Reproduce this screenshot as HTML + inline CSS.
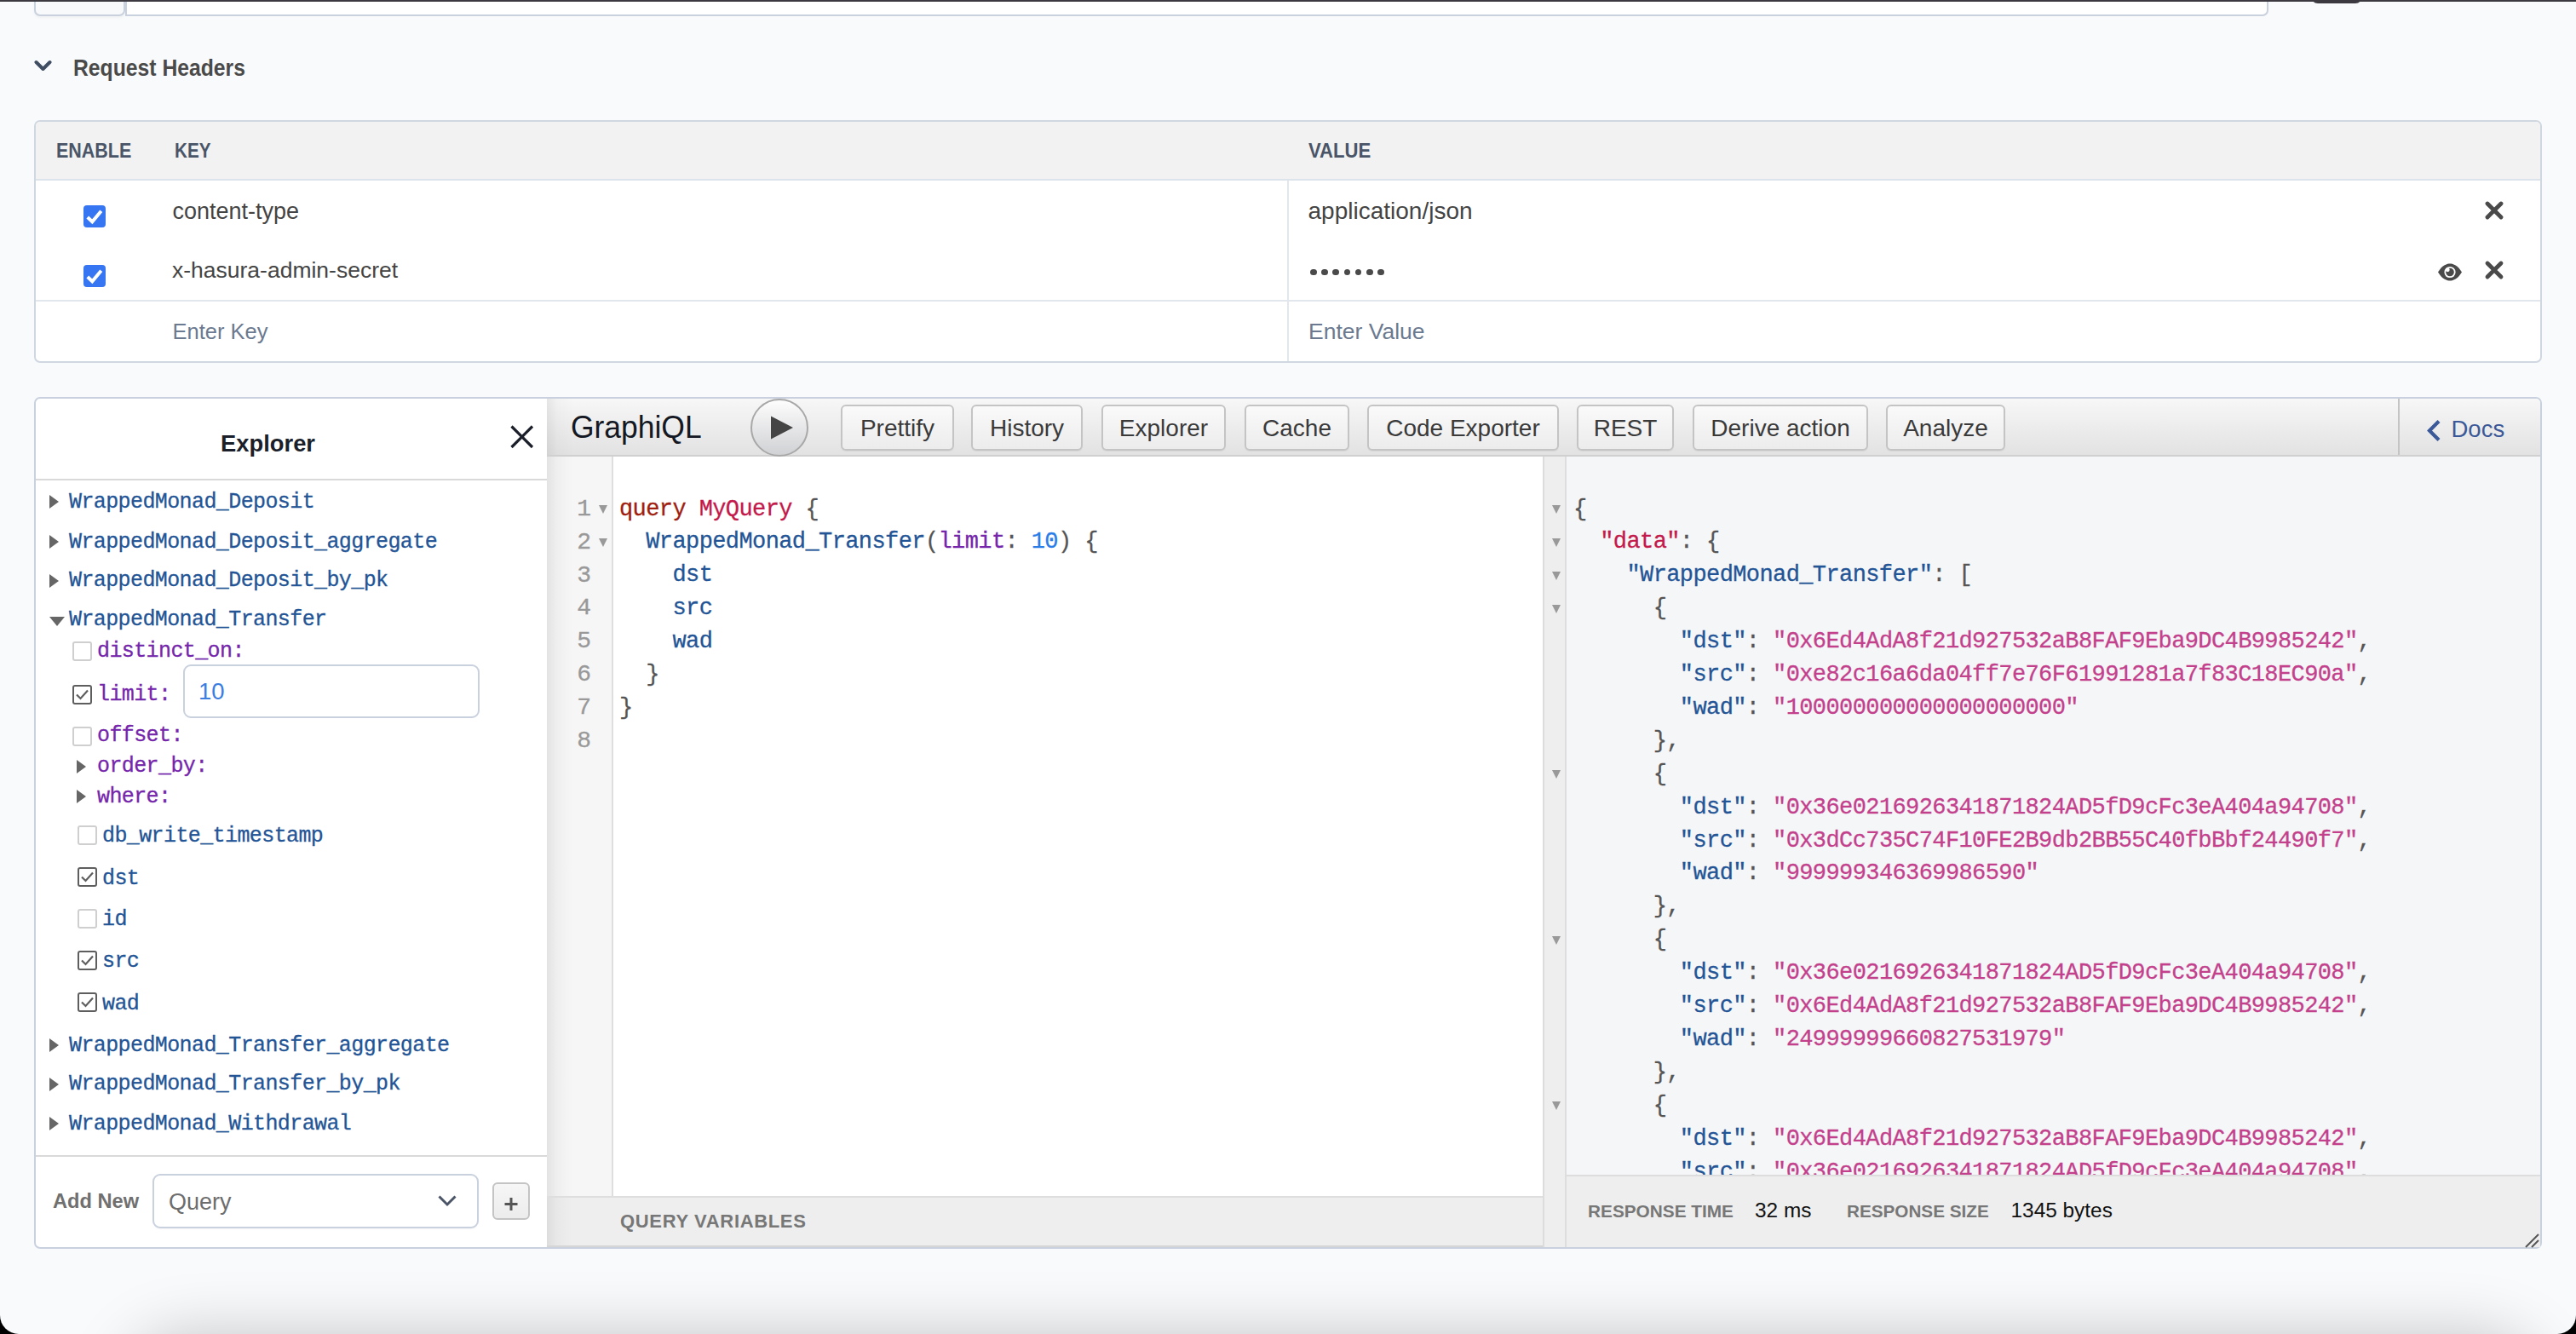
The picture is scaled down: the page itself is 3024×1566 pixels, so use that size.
<!DOCTYPE html>
<html><head><meta charset="utf-8">
<style>
*{box-sizing:border-box;margin:0;padding:0}
html,body{width:3024px;height:1566px;overflow:hidden;background:#000}
body{font-family:"Liberation Sans",sans-serif;position:relative}
.win{position:absolute;left:0;top:0;width:3024px;height:1566px;background:#f9fafc;border-radius:0 0 22px 22px;overflow:hidden}
.abs{position:absolute}
.mono{font-family:"Liberation Mono",monospace;-webkit-text-stroke-width:0.3px}
.t{position:absolute;white-space:pre;line-height:1}
.btn{position:absolute;top:475px;height:54px;border:2px solid #c4c4c4;border-radius:6px;background:linear-gradient(#fafafa,#ececec);box-shadow:0 1px 1px rgba(0,0,0,0.06)}
.cb{position:absolute;width:23px;height:23px;border:2.5px solid #cfcfcf;border-radius:3px;background:#fff}
.cbk{border-color:#5e5e5e}
.tri{position:absolute;width:0;height:0;border-top:8.5px solid transparent;border-bottom:8.5px solid transparent;border-left:11px solid #666}
.trid{position:absolute;width:0;height:0;border-left:9.5px solid transparent;border-right:9.5px solid transparent;border-top:11px solid #666}
.fold{position:absolute;width:0;height:0;border-left:6px solid transparent;border-right:6px solid transparent;border-top:10px solid #999}
</style></head><body>
<div class="win">
<div class="abs" style="left:40px;top:-12px;width:107px;height:31px;border:2px solid #c9d1de;border-radius:7px;background:#f8f9fb;box-shadow:0 2px 3px rgba(0,0,0,0.04)"></div>
<div class="abs" style="left:147px;top:-12px;width:2516px;height:31px;border:2px solid #c9d1de;border-radius:0 7px 7px 0;background:#fff"></div>
<div class="abs" style="left:0px;top:0px;width:3024px;height:2px;background:#3c3a40"></div>
<div class="abs" style="left:2713px;top:-12px;width:60px;height:16px;background:#3c3a40;border-radius:9px"></div>
<svg class="abs" style="left:40px;top:69px" width="22" height="18" viewBox="0 0 22 18"><path d="M2.5 4 L10.5 12 L18.5 4" fill="none" stroke="#3f4d63" stroke-width="4" stroke-linecap="round" stroke-linejoin="round"/></svg>
<div class="t" style="left:86.0px;top:66.3px;font-size:28px;color:#4a4a4a;font-weight:bold;transform:scaleX(0.883);transform-origin:0 0;">Request Headers</div>
<div class="abs" style="left:40px;top:141px;width:2944px;height:285px;border:2px solid #d0d7e1;border-radius:7px;background:#fff"></div>
<div class="abs" style="left:42px;top:143px;width:2940px;height:67px;background:#f2f2f2;border-radius:5px 5px 0 0"></div>
<div class="abs" style="left:42px;top:210px;width:2940px;height:2px;background:#dde3ea"></div>
<div class="t" style="left:66.0px;top:164.7px;font-size:24px;color:#4a5568;font-weight:bold;transform:scaleX(0.895);transform-origin:0 0;">ENABLE</div>
<div class="t" style="left:205.0px;top:164.7px;font-size:24px;color:#4a5568;font-weight:bold;transform:scaleX(0.86);transform-origin:0 0;">KEY</div>
<div class="t" style="left:1536.0px;top:164.7px;font-size:24px;color:#4a5568;font-weight:bold;transform:scaleX(0.92);transform-origin:0 0;">VALUE</div>
<div class="abs" style="left:1511px;top:212px;width:2px;height:212px;background:#e2e7ee"></div>
<div class="abs" style="left:42px;top:352px;width:2940px;height:2px;background:#e2e7ee"></div>
<div class="abs" style="left:98px;top:241px;width:26px;height:26px;background:#3676f2;border-radius:4px"></div>
<svg class="abs" style="left:98px;top:241px" width="26" height="26" viewBox="0 0 26 26"><path d="M4.8 14 L10.3 19.3 L20.8 6.8" fill="none" stroke="#fff" stroke-width="4"/></svg>
<div class="abs" style="left:98px;top:311px;width:26px;height:26px;background:#3676f2;border-radius:4px"></div>
<svg class="abs" style="left:98px;top:311px" width="26" height="26" viewBox="0 0 26 26"><path d="M4.8 14 L10.3 19.3 L20.8 6.8" fill="none" stroke="#fff" stroke-width="4"/></svg>
<div class="t" style="left:202.5px;top:234.8px;font-size:27px;color:#444;font-weight:normal;">content-type</div>
<div class="t" style="left:202.0px;top:304.4px;font-size:26.5px;color:#444;font-weight:normal;">x-hasura-admin-secret</div>
<div class="t" style="left:1535.5px;top:234.3px;font-size:28px;color:#444;font-weight:normal;">application/json</div>
<div class="abs" style="left:1538.0px;top:315.5px;width:7.5px;height:7.5px;border-radius:50%;background:#4a4a4a"></div>
<div class="abs" style="left:1551.2px;top:315.5px;width:7.5px;height:7.5px;border-radius:50%;background:#4a4a4a"></div>
<div class="abs" style="left:1564.4px;top:315.5px;width:7.5px;height:7.5px;border-radius:50%;background:#4a4a4a"></div>
<div class="abs" style="left:1577.6px;top:315.5px;width:7.5px;height:7.5px;border-radius:50%;background:#4a4a4a"></div>
<div class="abs" style="left:1590.8px;top:315.5px;width:7.5px;height:7.5px;border-radius:50%;background:#4a4a4a"></div>
<div class="abs" style="left:1604.0px;top:315.5px;width:7.5px;height:7.5px;border-radius:50%;background:#4a4a4a"></div>
<div class="abs" style="left:1617.2px;top:315.5px;width:7.5px;height:7.5px;border-radius:50%;background:#4a4a4a"></div>
<svg class="abs" style="left:2916px;top:235px" width="24" height="24" viewBox="0 0 24 24"><path d="M4 4 L20 20 M20 4 L4 20" stroke="#4a4a4a" stroke-width="4.8" stroke-linecap="round"/></svg>
<svg class="abs" style="left:2916px;top:305px" width="24" height="24" viewBox="0 0 24 24"><path d="M4 4 L20 20 M20 4 L4 20" stroke="#4a4a4a" stroke-width="4.8" stroke-linecap="round"/></svg>
<svg class="abs" style="left:2861px;top:309px" width="30" height="21" viewBox="0 0 30 21"><path d="M1 10.5 C6 2 12 0.5 15 0.5 C18 0.5 24 2 29 10.5 C24 19 18 20.5 15 20.5 C12 20.5 6 19 1 10.5 Z" fill="#4a4a4a"/><circle cx="15" cy="10.5" r="6.6" fill="#fff"/><circle cx="15" cy="10.5" r="4.8" fill="#4a4a4a"/><circle cx="12.3" cy="7.8" r="2.4" fill="#fff"/></svg>
<div class="t" style="left:202.5px;top:377.4px;font-size:25.5px;color:#6b7a90;font-weight:normal;">Enter Key</div>
<div class="t" style="left:1536.0px;top:376.1px;font-size:26.5px;color:#6b7a90;font-weight:normal;">Enter Value</div>
<div class="abs" style="left:40px;top:466px;width:2944px;height:1000px;border:2px solid #c9d1de;border-radius:7px;background:#fff"></div>
<div class="abs" style="left:42px;top:562px;width:600px;height:2px;background:#d9d9d9"></div>
<div class="t" style="left:259.0px;top:507.3px;font-size:28px;color:#1b1f2a;font-weight:bold;transform:scaleX(0.977);transform-origin:0 0;">Explorer</div>
<svg class="abs" style="left:598px;top:498px" width="30" height="30" viewBox="0 0 30 30"><path d="M2.5 2.5 L27 27 M27 2.5 L2.5 27" stroke="#1b1f2a" stroke-width="3.2"/></svg>
<div class="tri" style="left:58px;top:581.4px"></div>
<div class="t mono" style="left:81.0px;top:577.2px;font-size:25px;letter-spacing:-0.6px;color:#235596;">WrappedMonad_Deposit</div>
<div class="tri" style="left:58px;top:628.0px"></div>
<div class="t mono" style="left:81.0px;top:623.8px;font-size:25px;letter-spacing:-0.6px;color:#235596;">WrappedMonad_Deposit_aggregate</div>
<div class="tri" style="left:58px;top:673.5px"></div>
<div class="t mono" style="left:81.0px;top:669.3px;font-size:25px;letter-spacing:-0.6px;color:#235596;">WrappedMonad_Deposit_by_pk</div>
<div class="trid" style="left:57.5px;top:723.5px"></div>
<div class="t mono" style="left:81.0px;top:715.4px;font-size:25px;letter-spacing:-0.6px;color:#235596;">WrappedMonad_Transfer</div>
<div class="cb" style="left:84.5px;top:752.5px"></div>
<div class="t mono" style="left:114.0px;top:751.6px;font-size:25px;letter-spacing:-0.6px;color:#7526ab;">distinct_on:</div>
<div class="cb cbk" style="left:84.5px;top:803.5px"></div>
<svg class="abs" style="left:84.5px;top:803.5px" width="23" height="23" viewBox="0 0 23 23"><path d="M5 11.5 L9.5 16 L18 6.5" fill="none" stroke="#5e5e5e" stroke-width="2.2"/></svg>
<div class="t mono" style="left:114.0px;top:802.5px;font-size:25px;letter-spacing:-0.6px;color:#7526ab;">limit:</div>
<div class="abs" style="left:215px;top:780px;width:348px;height:63px;border:2px solid #c9d1de;border-radius:9px;background:#fff"></div>
<div class="t" style="left:233.0px;top:798.4px;font-size:27.5px;color:#3b7de0;font-weight:normal;">10</div>
<div class="cb" style="left:84.5px;top:852.5px"></div>
<div class="t mono" style="left:114.0px;top:851.0px;font-size:25px;letter-spacing:-0.6px;color:#7526ab;">offset:</div>
<div class="tri" style="left:90px;top:891.5px"></div>
<div class="t mono" style="left:114.0px;top:886.6px;font-size:25px;letter-spacing:-0.6px;color:#7526ab;">order_by:</div>
<div class="tri" style="left:90px;top:927.0px"></div>
<div class="t mono" style="left:114.0px;top:923.3px;font-size:25px;letter-spacing:-0.6px;color:#7526ab;">where:</div>
<div class="cb" style="left:90.5px;top:968.5px"></div>
<div class="t mono" style="left:120.0px;top:969.4px;font-size:25px;letter-spacing:-0.6px;color:#235596;">db_write_timestamp</div>
<div class="cb cbk" style="left:90.5px;top:1017.7px"></div>
<svg class="abs" style="left:90.5px;top:1017.7px" width="23" height="23" viewBox="0 0 23 23"><path d="M5 11.5 L9.5 16 L18 6.5" fill="none" stroke="#5e5e5e" stroke-width="2.2"/></svg>
<div class="t mono" style="left:120.0px;top:1018.8px;font-size:25px;letter-spacing:-0.6px;color:#235596;">dst</div>
<div class="cb" style="left:90.5px;top:1066.5px"></div>
<div class="t mono" style="left:120.0px;top:1067.4px;font-size:25px;letter-spacing:-0.6px;color:#235596;">id</div>
<div class="cb cbk" style="left:90.5px;top:1115.5px"></div>
<svg class="abs" style="left:90.5px;top:1115.5px" width="23" height="23" viewBox="0 0 23 23"><path d="M5 11.5 L9.5 16 L18 6.5" fill="none" stroke="#5e5e5e" stroke-width="2.2"/></svg>
<div class="t mono" style="left:120.0px;top:1116.4px;font-size:25px;letter-spacing:-0.6px;color:#235596;">src</div>
<div class="cb cbk" style="left:90.5px;top:1164.8px"></div>
<svg class="abs" style="left:90.5px;top:1164.8px" width="23" height="23" viewBox="0 0 23 23"><path d="M5 11.5 L9.5 16 L18 6.5" fill="none" stroke="#5e5e5e" stroke-width="2.2"/></svg>
<div class="t mono" style="left:120.0px;top:1166.2px;font-size:25px;letter-spacing:-0.6px;color:#235596;">wad</div>
<div class="tri" style="left:58px;top:1218.9px"></div>
<div class="t mono" style="left:81.0px;top:1214.7px;font-size:25px;letter-spacing:-0.6px;color:#235596;">WrappedMonad_Transfer_aggregate</div>
<div class="tri" style="left:58px;top:1264.6px"></div>
<div class="t mono" style="left:81.0px;top:1260.4px;font-size:25px;letter-spacing:-0.6px;color:#235596;">WrappedMonad_Transfer_by_pk</div>
<div class="tri" style="left:58px;top:1310.7px"></div>
<div class="t mono" style="left:81.0px;top:1306.5px;font-size:25px;letter-spacing:-0.6px;color:#235596;">WrappedMonad_Withdrawal</div>
<div class="abs" style="left:42px;top:1356px;width:600px;height:2px;background:#d9d9d9"></div>
<div class="t" style="left:62.0px;top:1398.3px;font-size:24px;color:#707070;font-weight:bold;transform:scaleX(0.985);transform-origin:0 0;">Add New</div>
<div class="abs" style="left:179px;top:1378px;width:383px;height:64px;border:2px solid #c9d1de;border-radius:9px;background:#fff;box-shadow:0 1px 2px rgba(0,0,0,0.04)"></div>
<div class="t" style="left:198.0px;top:1398.1px;font-size:27px;color:#6d6d6d;font-weight:normal;">Query</div>
<svg class="abs" style="left:512px;top:1400px" width="26" height="20" viewBox="0 0 26 20"><path d="M3.5 4.5 L13 14 L22.5 4.5" fill="none" stroke="#4a5568" stroke-width="3"/></svg>
<div class="abs" style="left:578px;top:1388px;width:44px;height:44px;border:2px solid #c4c4c4;border-radius:6px;background:linear-gradient(#f6f6f6,#ececec)"></div>
<svg class="abs" style="left:590px;top:1400px" width="20" height="28" viewBox="0 0 20 28"><path d="M10 6 V21 M2.5 13.5 H17.5" stroke="#555" stroke-width="3"/></svg>
<div class="abs" style="left:642px;top:468px;width:2340px;height:66px;background:linear-gradient(#f7f7f7,#e2e2e2);border-top-right-radius:5px"></div>
<div class="abs" style="left:642px;top:534px;width:2340px;height:2px;background:#d0d0d0"></div>
<div class="abs" style="left:642px;top:468px;width:33px;height:66px;background:linear-gradient(90deg,rgba(0,0,0,0.07),rgba(0,0,0,0.02) 12px,rgba(0,0,0,0) 32px)"></div>
<div class="t" style="left:670.0px;top:483.3px;font-size:37.5px;color:#141823;font-weight:normal;transform:scaleX(0.945);transform-origin:0 0;">GraphiQL</div>
<div class="abs" style="left:881px;top:467.5px;width:68px;height:68px;border-radius:50%;border:2px solid #a8a8a8;background:linear-gradient(#fdfdfd,#d0d1d4)"></div>
<svg class="abs" style="left:904px;top:487px" width="28" height="30" viewBox="0 0 28 30"><path d="M1 1.5 L27 15 L1 28.5 Z" fill="#444"/></svg>
<div class="btn" style="left:987px;width:133px"></div>
<div class="t" style="left:987px;width:133px;top:488.8px;font-size:28px;color:#3a3a3a;text-align:center">Prettify</div>
<div class="btn" style="left:1140px;width:131px"></div>
<div class="t" style="left:1140px;width:131px;top:488.8px;font-size:28px;color:#3a3a3a;text-align:center">History</div>
<div class="btn" style="left:1293px;width:146px"></div>
<div class="t" style="left:1293px;width:146px;top:488.8px;font-size:28px;color:#3a3a3a;text-align:center">Explorer</div>
<div class="btn" style="left:1461px;width:123px"></div>
<div class="t" style="left:1461px;width:123px;top:488.8px;font-size:28px;color:#3a3a3a;text-align:center">Cache</div>
<div class="btn" style="left:1605px;width:225px"></div>
<div class="t" style="left:1605px;width:225px;top:488.8px;font-size:28px;color:#3a3a3a;text-align:center">Code Exporter</div>
<div class="btn" style="left:1851px;width:114px"></div>
<div class="t" style="left:1851px;width:114px;top:488.8px;font-size:28px;color:#3a3a3a;text-align:center">REST</div>
<div class="btn" style="left:1987px;width:206px"></div>
<div class="t" style="left:1987px;width:206px;top:488.8px;font-size:28px;color:#3a3a3a;text-align:center">Derive action</div>
<div class="btn" style="left:2214px;width:140px"></div>
<div class="t" style="left:2214px;width:140px;top:488.8px;font-size:28px;color:#3a3a3a;text-align:center">Analyze</div>
<div class="abs" style="left:2815px;top:468px;width:2px;height:66px;background:#c4c4c4"></div>
<svg class="abs" style="left:2846px;top:491px" width="22" height="30" viewBox="0 0 22 30"><path d="M17 3.5 L6 14.5 L17 25.5" fill="none" stroke="#3b5998" stroke-width="4.2"/></svg>
<div class="t" style="left:2877.5px;top:490.1px;font-size:27.5px;color:#3b5998;font-weight:normal;">Docs</div>
<div class="abs" style="left:642px;top:536px;width:77px;height:868px;background:linear-gradient(90deg,#e3e3e3,#efefef 12px,#f6f6f6 30px,#f6f6f6)"></div>
<div class="abs" style="left:718px;top:536px;width:2px;height:868px;background:#dedede"></div>
<div class="t mono" style="left:650px;width:44px;text-align:right;top:583.7px;font-size:28px;color:#999">1</div>
<div class="t mono" style="left:650px;width:44px;text-align:right;top:622.6px;font-size:28px;color:#999">2</div>
<div class="t mono" style="left:650px;width:44px;text-align:right;top:661.5px;font-size:28px;color:#999">3</div>
<div class="t mono" style="left:650px;width:44px;text-align:right;top:700.4px;font-size:28px;color:#999">4</div>
<div class="t mono" style="left:650px;width:44px;text-align:right;top:739.3px;font-size:28px;color:#999">5</div>
<div class="t mono" style="left:650px;width:44px;text-align:right;top:778.2px;font-size:28px;color:#999">6</div>
<div class="t mono" style="left:650px;width:44px;text-align:right;top:817.1px;font-size:28px;color:#999">7</div>
<div class="t mono" style="left:650px;width:44px;text-align:right;top:856.0px;font-size:28px;color:#999">8</div>
<div class="fold" style="left:702.5px;top:593.0px;border-left-width:5.3px;border-right-width:5.3px"></div>
<div class="fold" style="left:702.5px;top:631.9px;border-left-width:5.3px;border-right-width:5.3px"></div>
<div class="t mono" style="left:727.0px;top:584.5px;font-size:27px;letter-spacing:-0.6px;color:#333;"><span style="color:#a01e0f">query</span> <span style="color:#c3194b">MyQuery</span> <span style="color:#555">{</span></div>
<div class="t mono" style="left:727.0px;top:623.4px;font-size:27px;letter-spacing:-0.6px;color:#333;">  <span style="color:#235596">WrappedMonad_Transfer</span><span style="color:#555">(</span><span style="color:#7526ab">limit</span><span style="color:#555">:</span> <span style="color:#2a7de8">10</span><span style="color:#555">)</span> <span style="color:#555">{</span></div>
<div class="t mono" style="left:727.0px;top:662.3px;font-size:27px;letter-spacing:-0.6px;color:#333;">    <span style="color:#235596">dst</span></div>
<div class="t mono" style="left:727.0px;top:701.2px;font-size:27px;letter-spacing:-0.6px;color:#333;">    <span style="color:#235596">src</span></div>
<div class="t mono" style="left:727.0px;top:740.1px;font-size:27px;letter-spacing:-0.6px;color:#333;">    <span style="color:#235596">wad</span></div>
<div class="t mono" style="left:727.0px;top:779.0px;font-size:27px;letter-spacing:-0.6px;color:#333;">  <span style="color:#555">}</span></div>
<div class="t mono" style="left:727.0px;top:817.9px;font-size:27px;letter-spacing:-0.6px;color:#333;"><span style="color:#555">}</span></div>
<div class="abs" style="left:642px;top:1404px;width:1169px;height:2px;background:#dedede"></div>
<div class="abs" style="left:642px;top:1406px;width:1169px;height:56px;background:linear-gradient(90deg,#dddddd,#e8e8e8 12px,#eeeeee 30px,#eeeeee)"></div>
<div class="abs" style="left:642px;top:1462px;width:1169px;height:2px;background:#d6d6d6"></div>
<div class="t" style="left:728.0px;top:1423.4px;font-size:22px;color:#777;font-weight:bold;letter-spacing:0.66px">QUERY VARIABLES</div>
<div class="abs" style="left:1811px;top:536px;width:2px;height:928px;background:#dcdcdc"></div>
<div class="abs" style="left:1813px;top:536px;width:24px;height:928px;background:#eeeeee"></div>
<div class="abs" style="left:1837px;top:536px;width:2px;height:928px;background:#dddddd"></div>
<div class="abs" style="left:1839px;top:536px;width:1143px;height:843px;background:#f5f6f8"></div>
<div class="abs" style="left:1839px;top:536px;width:1143px;height:843px;overflow:hidden">
<div class="t mono" style="left:8px;top:48.5px;font-size:27px;letter-spacing:-0.6px;color:#555"><span style="color:#555">{</span></div>
<div class="t mono" style="left:8px;top:87.4px;font-size:27px;letter-spacing:-0.6px;color:#555">  <span style="color:#c3194b">"data"</span><span style="color:#555">:</span> <span style="color:#555">{</span></div>
<div class="t mono" style="left:8px;top:126.3px;font-size:27px;letter-spacing:-0.6px;color:#555">    <span style="color:#235596">"WrappedMonad_Transfer"</span><span style="color:#555">:</span> <span style="color:#555">[</span></div>
<div class="t mono" style="left:8px;top:165.2px;font-size:27px;letter-spacing:-0.6px;color:#555">      <span style="color:#555">{</span></div>
<div class="t mono" style="left:8px;top:204.1px;font-size:27px;letter-spacing:-0.6px;color:#555">        <span style="color:#235596">"dst"</span><span style="color:#555">:</span> <span style="color:#c3418c">"0x6Ed4AdA8f21d927532aB8FAF9Eba9DC4B9985242"</span><span style="color:#555">,</span></div>
<div class="t mono" style="left:8px;top:243.0px;font-size:27px;letter-spacing:-0.6px;color:#555">        <span style="color:#235596">"src"</span><span style="color:#555">:</span> <span style="color:#c3418c">"0xe82c16a6da04ff7e76F61991281a7f83C18EC90a"</span><span style="color:#555">,</span></div>
<div class="t mono" style="left:8px;top:281.9px;font-size:27px;letter-spacing:-0.6px;color:#555">        <span style="color:#235596">"wad"</span><span style="color:#555">:</span> <span style="color:#c3418c">"100000000000000000000"</span></div>
<div class="t mono" style="left:8px;top:320.8px;font-size:27px;letter-spacing:-0.6px;color:#555">      <span style="color:#555">},</span></div>
<div class="t mono" style="left:8px;top:359.7px;font-size:27px;letter-spacing:-0.6px;color:#555">      <span style="color:#555">{</span></div>
<div class="t mono" style="left:8px;top:398.6px;font-size:27px;letter-spacing:-0.6px;color:#555">        <span style="color:#235596">"dst"</span><span style="color:#555">:</span> <span style="color:#c3418c">"0x36e0216926341871824AD5fD9cFc3eA404a94708"</span><span style="color:#555">,</span></div>
<div class="t mono" style="left:8px;top:437.5px;font-size:27px;letter-spacing:-0.6px;color:#555">        <span style="color:#235596">"src"</span><span style="color:#555">:</span> <span style="color:#c3418c">"0x3dCc735C74F10FE2B9db2BB55C40fbBbf24490f7"</span><span style="color:#555">,</span></div>
<div class="t mono" style="left:8px;top:476.4px;font-size:27px;letter-spacing:-0.6px;color:#555">        <span style="color:#235596">"wad"</span><span style="color:#555">:</span> <span style="color:#c3418c">"999999346369986590"</span></div>
<div class="t mono" style="left:8px;top:515.3px;font-size:27px;letter-spacing:-0.6px;color:#555">      <span style="color:#555">},</span></div>
<div class="t mono" style="left:8px;top:554.2px;font-size:27px;letter-spacing:-0.6px;color:#555">      <span style="color:#555">{</span></div>
<div class="t mono" style="left:8px;top:593.1px;font-size:27px;letter-spacing:-0.6px;color:#555">        <span style="color:#235596">"dst"</span><span style="color:#555">:</span> <span style="color:#c3418c">"0x36e0216926341871824AD5fD9cFc3eA404a94708"</span><span style="color:#555">,</span></div>
<div class="t mono" style="left:8px;top:632.0px;font-size:27px;letter-spacing:-0.6px;color:#555">        <span style="color:#235596">"src"</span><span style="color:#555">:</span> <span style="color:#c3418c">"0x6Ed4AdA8f21d927532aB8FAF9Eba9DC4B9985242"</span><span style="color:#555">,</span></div>
<div class="t mono" style="left:8px;top:670.9px;font-size:27px;letter-spacing:-0.6px;color:#555">        <span style="color:#235596">"wad"</span><span style="color:#555">:</span> <span style="color:#c3418c">"24999999660827531979"</span></div>
<div class="t mono" style="left:8px;top:709.8px;font-size:27px;letter-spacing:-0.6px;color:#555">      <span style="color:#555">},</span></div>
<div class="t mono" style="left:8px;top:748.7px;font-size:27px;letter-spacing:-0.6px;color:#555">      <span style="color:#555">{</span></div>
<div class="t mono" style="left:8px;top:787.6px;font-size:27px;letter-spacing:-0.6px;color:#555">        <span style="color:#235596">"dst"</span><span style="color:#555">:</span> <span style="color:#c3418c">"0x6Ed4AdA8f21d927532aB8FAF9Eba9DC4B9985242"</span><span style="color:#555">,</span></div>
<div class="t mono" style="left:8px;top:826.5px;font-size:27px;letter-spacing:-0.6px;color:#555">        <span style="color:#235596">"src"</span><span style="color:#555">:</span> <span style="color:#c3418c">"0x36e0216926341871824AD5fD9cFc3eA404a94708"</span><span style="color:#555">,</span></div>
<div class="t mono" style="left:8px;top:865.4px;font-size:27px;letter-spacing:-0.6px;color:#555">        <span style="color:#235596">"wad"</span><span style="color:#555">:</span> <span style="color:#c3418c">""</span></div>
<div class="t mono" style="left:8px;top:904.3px;font-size:27px;letter-spacing:-0.6px;color:#555">      <span style="color:#555">},</span></div>
</div>
<div class="fold" style="left:1821.5px;top:593.0px;border-left-width:5.3px;border-right-width:5.3px"></div>
<div class="fold" style="left:1821.5px;top:631.9px;border-left-width:5.3px;border-right-width:5.3px"></div>
<div class="fold" style="left:1821.5px;top:670.8px;border-left-width:5.3px;border-right-width:5.3px"></div>
<div class="fold" style="left:1821.5px;top:709.7px;border-left-width:5.3px;border-right-width:5.3px"></div>
<div class="fold" style="left:1821.5px;top:904.2px;border-left-width:5.3px;border-right-width:5.3px"></div>
<div class="fold" style="left:1821.5px;top:1098.7px;border-left-width:5.3px;border-right-width:5.3px"></div>
<div class="fold" style="left:1821.5px;top:1293.2px;border-left-width:5.3px;border-right-width:5.3px"></div>
<div class="abs" style="left:1839px;top:1379px;width:1143px;height:2px;background:#dddddd"></div>
<div class="abs" style="left:1839px;top:1381px;width:1143px;height:83px;background:#eeeeee"></div>
<div class="t" style="left:1863.5px;top:1411.2px;font-size:21px;color:#777;font-weight:bold;transform:scaleX(0.99);transform-origin:0 0;">RESPONSE TIME</div>
<div class="t" style="left:2060.0px;top:1409.3px;font-size:24.4px;color:#111;font-weight:normal;">32 ms</div>
<div class="t" style="left:2168.0px;top:1411.2px;font-size:21px;color:#777;font-weight:bold;transform:scaleX(0.985);transform-origin:0 0;">RESPONSE SIZE</div>
<div class="t" style="left:2360.5px;top:1409.3px;font-size:24.4px;color:#111;font-weight:normal;">1345 bytes</div>
<svg class="abs" style="left:2962px;top:1447px" width="20" height="18" viewBox="0 0 20 18"><path d="M3 17 L18 2 M10 17 L18 9" stroke="#555" stroke-width="2"/></svg>
<div class="abs" style="left:170px;top:1590px;width:2790px;height:100px;border-radius:50px;box-shadow:0 0 75px 22px rgba(0,0,0,0.22)"></div>
</div></body></html>
